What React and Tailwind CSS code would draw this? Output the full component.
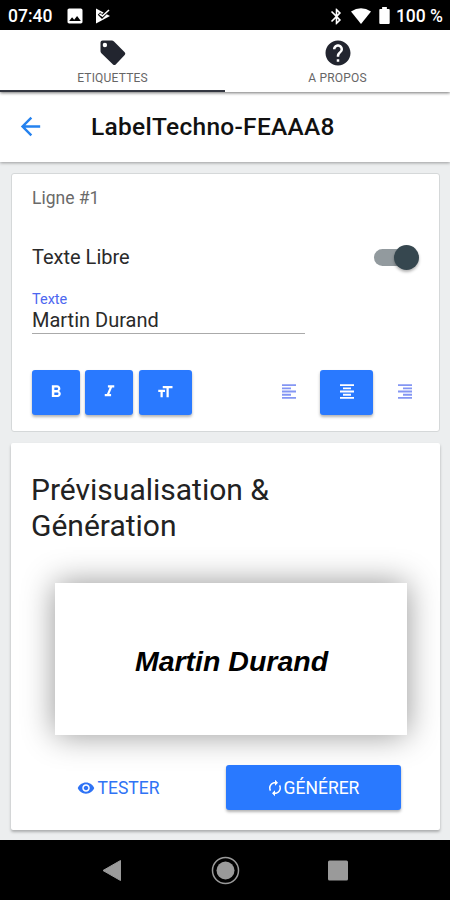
import React, { useState } from 'react';
import {
  MdAutorenew,
  MdFormatBold,
  MdFormatItalic,
  MdFormatSize,
  MdRemoveRedEye,
  MdBluetooth,
  MdHelp,
  MdImage,
  MdArrowBack,
} from 'react-icons/md';

const StatusBar = () => (
  <div className="h-[30px] bg-black text-white flex items-center px-2 pt-[2px] text-[17.5px] font-medium">
    <span className="w-[46px] whitespace-nowrap">07:40</span>
    <MdImage className="ml-[11px]" size={20} />
    <svg className="ml-[10px]" width="16" height="16" viewBox="0 0 16 16">
      <path d="M1 .5 L15 8 L1 15.5 Z" fill="white" />
      <path d="M4 5.5 L7 8.5 L13.5 2" fill="none" stroke="black" strokeWidth="3.4" />
      <path d="M4.5 6 L7.5 8 L14 2" fill="none" stroke="white" strokeWidth="1.6" />
    </svg>
    <div className="ml-auto -mr-[1px] flex items-center">
      <MdBluetooth size={19} />
      <svg className="ml-[5px]" width="20" height="16" viewBox="0 0 20 16">
        <path d="M0 3.5 Q10 -3 20 3.5 L10 16 Z" fill="white" />
      </svg>
      <svg className="ml-[8px] mr-[6px] -mt-[1px]" width="11" height="17" viewBox="0 0 11 18">
        <path d="M3 0H8V2H10Q11 2 11 3V17Q11 18 10 18H1Q0 18 0 17V3Q0 2 1 2H3Z" fill="white" />
      </svg>
      <span className="whitespace-nowrap">100 %</span>
    </div>
  </div>
);

const PriceTag = () => (
  <svg width="26" height="26" viewBox="0 0 26 26">
    <path
      fillRule="evenodd"
      d="M2.6 .5H11.8Q13 .5 14 1.4L24.7 12.2Q26 13.6 24.7 15L15.7 24.4Q14.4 25.7 13 24.4L1.4 13.2Q.5 12.3 .5 11.2V2.6Q.5 .5 2.6 .5ZM4.9 2.8A2.2 2.2 0 1 0 4.9 7.2A2.2 2.2 0 1 0 4.9 2.8Z"
      fill="#22252f"
    />
  </svg>
);

const alignPaths = {
  left: 'M0 1H14M0 4H9M0 7H14M0 10H9M0 13H14',
  center: 'M0 1H14M3 4H11M0 7H14M3 10H11M0 13H14',
  right: 'M0 1H14M5 4H14M0 7H14M5 10H14M0 13H14',
};

const AlignIcon = ({ align }) => (
  <svg width="14" height="15" viewBox="0 0 14 14" preserveAspectRatio="none">
    <path d={alignPaths[align]} stroke="currentColor" strokeWidth="1.7" />
  </svg>
);

const Tab = ({ icon, label, active }) => (
  <button
    className={`flex-1 h-[62px] flex flex-col items-center pt-[10px] border-b-[2px] ${
      active ? 'border-[#343741]' : 'border-transparent'
    }`}
  >
    {icon}
    <span className="mt-[4px] text-[12px] leading-[17px] tracking-[0.2px] text-[#666]">{label}</span>
  </button>
);

const FormatButton = ({ icon, width, active = true }) => (
  <button
    className={`h-[45px] flex items-center justify-center pb-[2px] rounded-[3px] ${width} ${
      active ? 'bg-[#2979ff] text-white shadow-[0_2px_3px_rgba(0,0,0,0.3)]' : 'text-[#8496f3]'
    }`}
  >
    {icon}
  </button>
);

const LineCard = () => {
  const [text, setText] = useState('Martin Durand');

  return (
    <div className="ml-[11px] mr-[10px] mt-[11px] h-[259px] bg-white rounded-[3px] border border-[#d5d8d9] px-5 flex flex-col">
      <div className="mt-[12px] text-[17.5px] leading-[24px] text-[#6a6a6a]">Ligne #1</div>
      <div className="mt-[34px] flex items-center justify-between h-[26px]">
        <span className="text-[20px] text-[#2a2a2a]">Texte Libre</span>
        <div className="relative w-[45px] h-[25px] flex items-center">
          <div className="w-[40px] h-[17px] rounded-full bg-[#929a9e]" />
          <div className="absolute right-0 top-0 size-[25px] rounded-full bg-[#36474f] shadow-[0_2px_3px_rgba(0,0,0,0.3)]" />
        </div>
      </div>
      <div className="mt-[22px] w-[273px] border-b border-[#aaa]">
        <div className="text-[14.5px] leading-[16px] text-[#4d67f0]">Texte</div>
        <input
          className="block w-full h-[25px] pb-[2px] text-[20px] text-[#2a2a2a] outline-none"
          value={text}
          onChange={(e) => setText(e.target.value)}
        />
      </div>
      <div className="mt-[36px] flex">
        <FormatButton width="w-[48px]" icon={<MdFormatBold className="-ml-[1px]" size={20} />} />
        <FormatButton width="w-[48px] ml-[5px]" icon={<MdFormatItalic size={19} />} />
        <FormatButton width="w-[53px] ml-[6px]" icon={<MdFormatSize className="-ml-[2px]" size={18} />} />
        <FormatButton width="w-[53px] ml-[70px]" active={false} icon={<AlignIcon align="left" />} />
        <FormatButton width="w-[53px] ml-[5px]" icon={<AlignIcon align="center" />} />
        <FormatButton width="w-[53px] ml-[5px] -mr-[15px]" active={false} icon={<AlignIcon align="right" />} />
      </div>
    </div>
  );
};

const PreviewCard = () => (
  <div className="ml-[11px] mr-[10px] mt-[11px] h-[387px] bg-white rounded-[2px] shadow-[0_2px_3px_rgba(0,0,0,0.28)] overflow-hidden">
    <h2 className="pt-[29px] pl-5 text-[30px] leading-[36px] text-[#222] font-normal">
      Prévisualisation &amp;
      <br />
      Génération
    </h2>
    <div className="mt-[39px] ml-[44px] w-[352px] h-[152px] bg-white shadow-[0_0_30px_rgba(0,0,0,0.42)] flex items-center justify-center">
      <span className="font-['Liberation_Sans',sans-serif] text-[28.5px] font-bold italic text-black pt-[4px] pl-[1px]">
        Martin Durand
      </span>
    </div>
    <div className="mt-[30px] flex text-[17.5px]">
      <button className="ml-[19px] w-[176px] h-[45px] flex items-center justify-center text-[#2f73f5]">
        <MdRemoveRedEye size={18} />
        <span className="ml-[3px] pt-[1px]">TESTER</span>
      </button>
      <button className="ml-[20px] w-[175px] h-[45px] pr-[2px] flex items-center justify-center rounded-[3px] bg-[#2979ff] text-white shadow-[0_2px_3px_rgba(0,0,0,0.3)]">
        <MdAutorenew size={18} />
        <span className="pt-[1px]">GÉNÉRER</span>
      </button>
    </div>
  </div>
);

const NavBar = () => (
  <div className="mt-auto h-[60px] bg-black">
    <svg width="450" height="60" viewBox="0 0 450 60">
      <path d="M103 30.5L120.5 20.5V40.5Z" fill="#9a9a9a" stroke="#9a9a9a" strokeLinejoin="round" />
      <circle cx="225.5" cy="30.5" r="13" fill="none" stroke="#9a9a9a" strokeWidth="1.5" />
      <circle cx="225.5" cy="30.5" r="9" fill="#9a9a9a" />
      <rect x="328" y="20.5" width="20" height="20" rx="1.5" fill="#9a9a9a" />
    </svg>
  </div>
);

const App = () => {
  return (
    <div className="w-[450px] h-[900px] flex flex-col overflow-hidden bg-[#eceeef] font-['Roboto',sans-serif]">
      <StatusBar />
      <div className="relative z-10 flex bg-white shadow-[0_1px_3px_rgba(0,0,0,0.55)]">
        <Tab active icon={<PriceTag />} label="ETIQUETTES" />
        <Tab icon={<MdHelp size={30} className="-m-[2px] text-[#22252f]" />} label="A PROPOS" />
      </div>
      <header className="h-[70px] bg-white flex items-center shadow-[0_1px_3px_rgba(0,0,0,0.35)]">
        <MdArrowBack className="ml-[16px] -mt-[1px] text-[#2582ef]" size={29} />
        <h1 className="ml-[46px] text-[24.5px] font-medium tracking-[0.28px] text-[#111]">LabelTechno-FEAAA8</h1>
      </header>
      <LineCard />
      <PreviewCard />
      <NavBar />
    </div>
  );
};

export default App;
